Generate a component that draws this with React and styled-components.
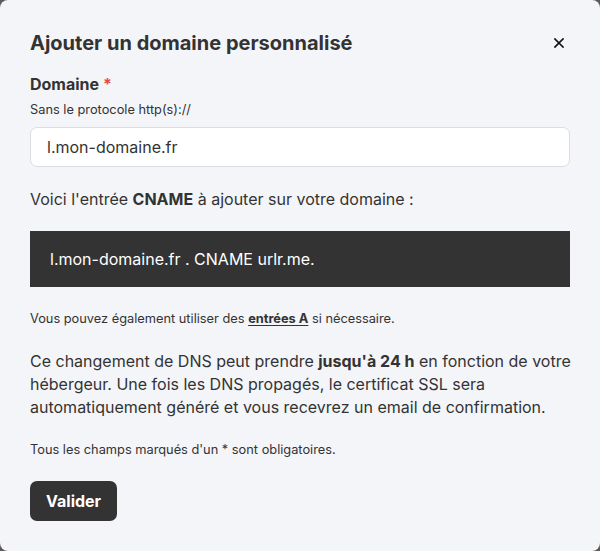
import React from "react"
import styled, { createGlobalStyle } from "styled-components"

const GlobalStyle = createGlobalStyle`
  html, body {
    margin: 0;
    padding: 0;
    background: #5a5a5a;
  }
  * {
    box-sizing: border-box;
  }
`

const Modal = styled.div`
  width: 600px;
  height: 551px;
  background: #f4f5f9;
  border-radius: 8px;
  padding: 30px 30px 0 30px;
  font-family: Inter, "Noto Sans", sans-serif;
  color: #333333;
  display: flex;
  flex-direction: column;
`

const Header = styled.div`
  display: flex;
  justify-content: space-between;
  align-items: center;
`

const Title = styled.h2`
  margin: 0;
  font-size: 20px;
  line-height: 26px;
  font-weight: 700;
`

const CloseButton = styled.button`
  border: none;
  background: none;
  padding: 0;
  margin-right: 4px;
  width: 14px;
  height: 14px;
  display: flex;
  align-items: center;
  justify-content: center;
  cursor: pointer;
  color: #111;
`

const Label = styled.label`
  margin-top: 16px;
  font-size: 16px;
  line-height: 24px;
  font-weight: 700;
`

const Required = styled.span`
  color: #e5483f;
`

const Small = styled.p`
  margin: ${p => p.$top || 0}px 0 0 0;
  font-size: 12.8px;
  line-height: 18px;
`

const Input = styled.input`
  margin-top: 8px;
  height: 40px;
  width: 100%;
  border: 1px solid #dcdde2;
  border-radius: 7px;
  background: #ffffff;
  padding: 0 16px;
  font-family: inherit;
  font-size: 16px;
  color: #333333;
  outline: none;
`

const Text = styled.p`
  margin: ${p => p.$top || 0}px ${p => p.$right || 0}px 0 0;
  font-size: 16px;
  line-height: ${p => p.$lh || 24}px;
`

const CodeBox = styled.div`
  margin-top: 20px;
  height: 56px;
  background: #333333;
  color: #ffffff;
  display: flex;
  align-items: center;
  padding: 0 20px;
  font-size: 16px;
`

const Link = styled.a`
  color: #333333;
  font-weight: 700;
  text-decoration: underline;
  text-underline-offset: 2px;
`

const SubmitButton = styled.button`
  margin-top: 22px;
  align-self: flex-start;
  height: 40px;
  padding: 0 16px;
  border: none;
  border-radius: 7px;
  background: #333333;
  color: #ffffff;
  font-family: inherit;
  font-size: 16px;
  font-weight: 700;
  cursor: pointer;
`

export default function App() {
  return (
    <>
      <GlobalStyle />
      <Modal>
        <Header>
          <Title>Ajouter un domaine personnalisé</Title>
          <CloseButton aria-label="Fermer">
            <svg width="10" height="10" viewBox="0 0 10 10">
              <path d="M1 1 L9 9 M9 1 L1 9" stroke="currentColor" strokeWidth="1.7" strokeLinecap="square" />
            </svg>
          </CloseButton>
        </Header>

        <Label>
          Domaine <Required>*</Required>
        </Label>
        <Small $top={5}>Sans le protocole http(s)://</Small>
        <Input defaultValue="l.mon-domaine.fr" />

        <Text $top={20}>
          Voici l'entrée <b>CNAME</b> à ajouter sur votre domaine :
        </Text>
        <CodeBox>l.mon-domaine.fr . CNAME urlr.me.</CodeBox>

        <Small $top={23}>
          Vous pouvez également utiliser des <Link href="#">entrées A</Link> si nécessaire.
        </Small>

        <Text $top={22} $lh={23} $right={-6}>
          Ce changement de DNS peut prendre <b>jusqu'à 24 h</b> en fonction de votre hébergeur. Une fois les DNS propagés, le certificat SSL sera automatiquement généré et vous recevrez un email de confirmation.
        </Text>

        <Small $top={22}>Tous les champs marqués d'un * sont obligatoires.</Small>

        <SubmitButton>Valider</SubmitButton>
      </Modal>
    </>
  )
}
